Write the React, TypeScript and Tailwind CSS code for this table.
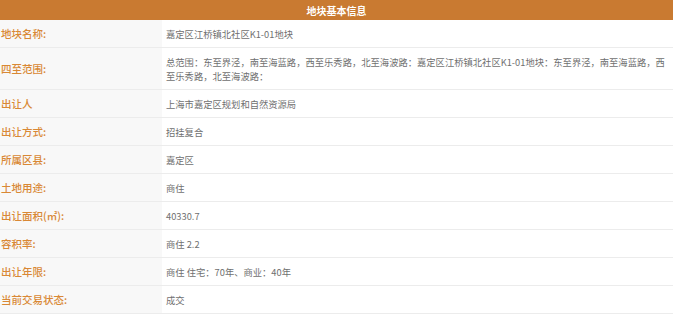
import React from 'react'

const ROWS: { label: string; value: string; tall?: boolean }[] = [
  { label: '地块名称:', value: '嘉定区江桥镇北社区K1-01地块' },
  {
    label: '四至范围:',
    value: '总范围：东至界泾，南至海蓝路，西至乐秀路，北至海波路：嘉定区江桥镇北社区K1-01地块：东至界泾，南至海蓝路，西至乐秀路，北至海波路：',
    tall: true,
  },
  { label: '出让人', value: '上海市嘉定区规划和自然资源局' },
  { label: '出让方式:', value: '招挂复合' },
  { label: '所属区县:', value: '嘉定区' },
  { label: '土地用途:', value: '商住' },
  { label: '出让面积(㎡):', value: '40330.7' },
  { label: '容积率:', value: '商住 2.2' },
  { label: '出让年限:', value: '商住 住宅：70年、商业：40年' },
  { label: '当前交易状态:', value: '成交' },
]

export default function App() {
  return (
    <div className="w-[673px] h-[317px] overflow-hidden bg-white font-['Noto_Sans_CJK_SC',sans-serif]">
      {/* header */}
      <div className="h-[20px] bg-[#c97a31] flex items-center justify-center text-white text-[10px] font-bold">
        地块基本信息
      </div>

      <div className="flex flex-col">
        {ROWS.map(r => (
          <div key={r.label}
            className={'flex border-b border-[#ececec] ' + (r.tall ? 'h-[42px]' : 'h-[28px]')}>
            <div className="w-[162px] shrink-0 bg-[#f8f8f8] flex items-center pl-[1px] text-[10.5px] font-medium text-[#d98835]">
              {r.label}
            </div>
            <div className="flex-1 flex items-center pl-[4px] pr-[2px] text-[9.3px] leading-[14px] text-[#6f6f6f]">
              {r.value}
            </div>
          </div>
        ))}
      </div>
    </div>
  )
}
